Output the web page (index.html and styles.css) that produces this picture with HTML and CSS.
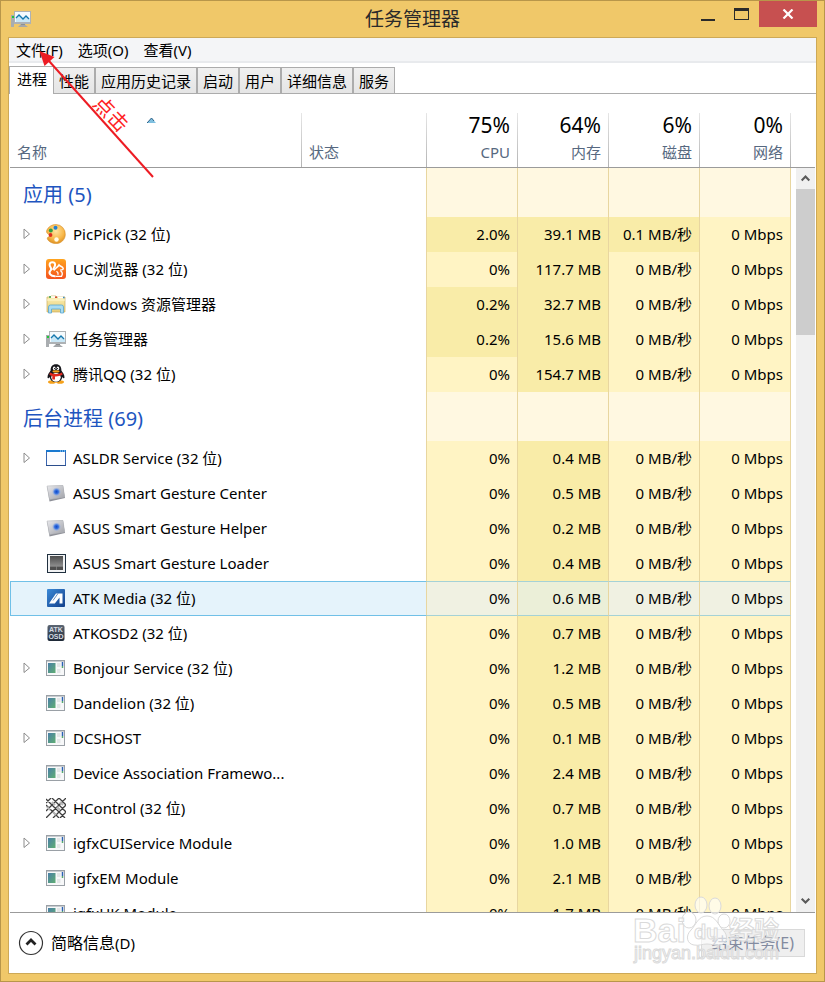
FILE: index.html
```html
<!DOCTYPE html>
<html lang="zh-CN">
<head>
<meta charset="utf-8">
<title>任务管理器</title>
<link rel="stylesheet" href="styles.css">
</head>
<body>
<svg class="defs" aria-hidden="true">
  <defs>
    <linearGradient id="gOrange" x1="0" y1="0" x2="0" y2="1"><stop offset="0" stop-color="#ffa51f"/><stop offset="1" stop-color="#f4511e"/></linearGradient>
    <radialGradient id="gPalette" cx=".5" cy=".35" r=".7"><stop offset="0" stop-color="#ffe3a0"/><stop offset=".6" stop-color="#f8b84a"/><stop offset="1" stop-color="#d98a1c"/></radialGradient>
    <linearGradient id="gBlue" x1="0" y1="0" x2="1" y2="1"><stop offset="0" stop-color="#3b8ad8"/><stop offset="1" stop-color="#123f8a"/></linearGradient>
    <linearGradient id="gPad" x1="0" y1="0" x2="1" y2="1"><stop offset="0" stop-color="#e9e9ec"/><stop offset="1" stop-color="#9fa1a8"/></linearGradient>
    <radialGradient id="gDot"><stop offset="0" stop-color="#0b45c8"/><stop offset=".45" stop-color="#3f78e0"/><stop offset="1" stop-color="#9db8ee" stop-opacity="0"/></radialGradient>
    <linearGradient id="gGreen" x1="0" y1="0" x2="1" y2="1"><stop offset="0" stop-color="#4a7fa8"/><stop offset="1" stop-color="#5fae72"/></linearGradient>
    <linearGradient id="gFolder" x1="0" y1="0" x2="0" y2="1"><stop offset="0" stop-color="#fbf0b4"/><stop offset="1" stop-color="#e9cd78"/></linearGradient>
    <linearGradient id="gNight" x1="0" y1="0" x2="0" y2="1"><stop offset="0" stop-color="#5c6673"/><stop offset="1" stop-color="#1d2836"/></linearGradient>
    <linearGradient id="gGrey" x1="0" y1="0" x2="0" y2="1"><stop offset="0" stop-color="#4c4c4c"/><stop offset="1" stop-color="#8c8c8c"/></linearGradient>
  </defs>
  <symbol id="i-monitor" viewBox="0 0 20 20">
    <rect x="0" y="6" width="3" height="12" fill="#a9adb0"/><rect x="1" y="7" width="2" height="2" fill="#1fc43a"/>
    <path d="M7 18l3-3h3l4 3z" fill="#a4a7aa"/><path d="M10 14h4v2h-4z" fill="#8d9093"/>
    <rect x="3" y="2" width="17" height="13" fill="#aeb2b5"/><rect x="4" y="3" width="15" height="10" fill="#f4fafd"/>
    <path d="M5 9l3-3 4 4 3-3 4 3v3H5z" fill="#c9e7f6"/><path d="M5 9l3-3 4 4 3-3 3 3" fill="none" stroke="#1478ae" stroke-width="1.300"/>
  </symbol>
  <symbol id="i-palette" viewBox="0 0 20 20">
    <path d="M10 .5a9.500 9.500 0 0 1 9.300 10c0 5-4.300 9.100-9.300 9.100-4 0-7.500-2-8.600-4.600-.6-1.500.9-2 1.900-2.400 1-.5.5-1.500-.6-2.100C.2 8.900.2 7.500 1 5.800 2.600 2.500 6 .5 10 .5z" fill="url(#gPalette)" stroke="#d7912c" stroke-width=".6"/>
    <circle cx="9.500" cy="3.700" r="2" fill="#1f7fd0"/><circle cx="4.800" cy="6.500" r="2" fill="#2ea045"/><circle cx="4.500" cy="11" r="1.900" fill="#dc3020"/><circle cx="10.500" cy="15.500" r="2.200" fill="#fffbe8"/>
  </symbol>
  <symbol id="i-uc" viewBox="0 0 20 20">
    <rect width="20" height="20" rx="3" fill="url(#gOrange)"/>
    <path d="M9.500 17.200C4.500 17.500 2 14 4.600 11.400 6.800 9.300 3.200 8 3.600 5.300c.4-2.800 5.200-3 5.500.2.200 2.300-1.600 3.300-1.900 5.300" fill="none" stroke="#fff" stroke-width="2"/>
    <path d="M8 11.500c.5-2.200 3.400-2.800 5-5.500.8 1.300 3.800 1.400 4.200 3.300.2 1.200-1.200 1.700-3 1.600" fill="none" stroke="#fff" stroke-width="1.500"/>
    <path d="M9.500 17.300h6c1.400-2.300.4-4.500-1-5.500M10.300 12.500q2.400.7 1.500 3.300" fill="none" stroke="#fff" stroke-width="1.300"/>
  </symbol>
  <symbol id="i-folder" viewBox="0 0 20 20">
    <path d="M1 3h3l1-1h5l1 1h8v15H1z" fill="url(#gFolder)" stroke="#cdb060" stroke-width=".7"/>
    <path d="M5 3h4M12 3.500h5" stroke="#fff" stroke-width="1.500"/><path d="M3 3h2" stroke="#3aa24b" stroke-width="1.500"/><path d="M9 3.200h2" stroke="#d04c3a" stroke-width="1.500"/><path d="M17 3.500h1.500" stroke="#3a8acb" stroke-width="1.500"/>
    <path d="M1 6h18" stroke="#fff8d0"/>
    <path d="M2.500 19v-6q0-2 2-2h11q2 0 2 2v6h-3v-4H5.500v4z" fill="#a9dcf2" stroke="#58a6cf" stroke-width=".8"/>
  </symbol>
  <symbol id="i-qq" viewBox="0 0 20 20">
    <ellipse cx="6" cy="18" rx="4" ry="1.800" fill="#f5a11b"/><ellipse cx="14" cy="18" rx="4" ry="1.800" fill="#f5a11b"/>
    <path d="M10 .3c3.700 0 5.400 2.500 5.400 6.200 1 1.700 3.300 4.300 3.100 7-.3 1.400-1.200.8-2.200-.6-.3 3-2.700 5.200-6.300 5.200S4 15.900 3.700 12.900c-1 1.400-1.900 2-2.200.6-.2-2.700 2.100-5.300 3.100-7C4.600 2.800 6.300.3 10 .3z" fill="#17171c"/>
    <ellipse cx="10" cy="13.300" rx="4.700" ry="4.400" fill="#fff"/>
    <ellipse cx="8.200" cy="4.300" rx="1.300" ry="1.900" fill="#fff"/><ellipse cx="11.900" cy="4.300" rx="1.300" ry="1.900" fill="#fff"/><circle cx="8.600" cy="4.600" r=".6"/><circle cx="11.500" cy="4.600" r=".6"/>
    <ellipse cx="10" cy="7.400" rx="3.500" ry="1.100" fill="#f5a11b"/>
    <path d="M4 8.500q6 3.200 12 0l.6 2.200q-4 2-7.600 1.700v3.200H6.300v-3.500q-1.600-.5-2.900-1.300z" fill="#e0281e"/>
  </symbol>
  <symbol id="i-window" viewBox="0 0 20 20">
    <rect x=".5" y="2.500" width="19" height="15" fill="#fbfcff" stroke="#3a66b0"/><path d="M0 2h20v2H0z" fill="#1878d0"/><path d="M14 3h1M16 3h1M18 3h1" stroke="#bfe0fb"/><path d="M0 17.500h20" stroke="#2a4d8c"/>
  </symbol>
  <symbol id="i-pad" viewBox="0 0 20 20">
    <path d="M1 3l16-.5 2 12.500L3.500 18.500z" fill="#8e9098"/><path d="M1 3l16-.5 1.500 11.500L3.500 16.500z" fill="url(#gPad)" stroke="#b4b6bb" stroke-width=".5"/><circle cx="10.500" cy="8.800" r="4.600" fill="url(#gDot)"/>
  </symbol>
  <symbol id="i-touch" viewBox="0 0 20 20">
    <rect x="1.500" y="1.500" width="18" height="18" fill="#f1f2f3" stroke="#20303f"/><rect x="4" y="3" width="13" height="10" fill="url(#gGrey)"/><path d="M4 13h13v4H4z" fill="#4f4f4f"/><path d="M4 13.500h13M10.500 13v4" stroke="#8a8a8a" stroke-width=".7"/>
  </symbol>
  <symbol id="i-atk" viewBox="0 0 20 20">
    <rect x="1" y="1" width="18" height="18" rx="1" fill="url(#gBlue)"/><path d="M3 15.500L10 5.500h6.500v10h-3V9.500L8.800 15.500z" fill="#fff"/><path d="M12 5.500L7 12.500" stroke="#2762ad" stroke-width=".7"/>
  </symbol>
  <symbol id="i-osd" viewBox="0 0 20 20">
    <rect x="1.500" y="2" width="17" height="16" rx="2" fill="url(#gNight)"/>
    <text x="10" y="9" class="osd-text">ATK</text><text x="10" y="16" class="osd-text">OSD</text>
  </symbol>
  <symbol id="i-app" viewBox="0 0 20 20">
    <rect x=".5" y="2.500" width="18" height="15" fill="#f7f8f9" stroke="#9aa0a6"/><path d="M1 3.500h17" stroke="#c8ccd0"/><rect x="2" y="5" width="7.500" height="10" fill="url(#gGreen)"/><path d="M11 6h3.500M11 8h3.500M11 12h3.500M11 14h3.500" stroke="#d0d3d6" stroke-width="1.200"/><path d="M16.500 4v4" stroke="#2c62b4" stroke-width="1.500"/><path d="M16.500 8v2" stroke="#56a871" stroke-width="1.500"/>
  </symbol>
  <symbol id="i-grid" viewBox="0 0 20 20">
    <g fill="none" stroke="#3e3e3e" stroke-width="1.300"><path d="M0 5l5-5M0 13L13 0M0 20L20 0M7 20L20 7M14 20l6-6M0 7l13 13M0 1l19 19M6 0l14 14M13 0l7 7"/></g>
    <path d="M1 9l3 3M6 4l3 3M11 9l3 3M7 14l3 3M14 4l3 3" stroke="#b5b5b5" stroke-width="2"/>
  </symbol>
  <symbol id="i-tri" viewBox="0 0 8 12"><path d="M1 1v9.500L6.500 6z" fill="#fff" stroke="#8c8c8c"/></symbol>
</svg>

<div class="window">
  <header class="titlebar">
    <svg class="icon"><use href="#i-monitor"/></svg>
    <h1>任务管理器</h1>
    <div class="controls">
      <button class="min" aria-label="最小化"><svg width="14" height="13"><path d="M0 11h14v2H0z" fill="#2a2a2a"/></svg></button>
      <button class="max" aria-label="最大化"><svg width="16" height="13"><path d="M0 0h15v12H0zM1 3v8h13V3z" fill="#2a2a2a" fill-rule="evenodd"/></svg></button>
      <button class="close" aria-label="关闭"><svg width="12" height="10"><path d="M1.500.5l9 9M10.500.5l-9 9" stroke="#fff" stroke-width="2.200"/></svg></button>
    </div>
  </header>

  <main class="client">
    <nav class="menu"><button>文件(F)</button><button>选项(O)</button><button>查看(V)</button></nav>
    <div class="tabs" role="tablist">
      <button role="tab" class="active" aria-selected="true">进程</button><button role="tab">性能</button><button role="tab">应用历史记录</button><button role="tab">启动</button><button role="tab">用户</button><button role="tab">详细信息</button><button role="tab">服务</button>
    </div>

    <div class="list">
      <table>
        <colgroup><col><col class="c-status"><col class="c-num"><col class="c-num"><col class="c-num"><col class="c-num"></colgroup>
        <thead><tr>
          <th class="left sorted"><svg class="sort" viewBox="0 0 9 5"><path d="M0 5l4.500-5L9 5z" fill="#7fc0e0"/><path d="M0 5l4.500-5L7 3" fill="none" stroke="#2b5f86"/></svg>名称</th>
          <th class="left">状态</th>
          <th><b>75%</b>CPU</th><th><b>64%</b>内存</th><th><b>6%</b>磁盘</th><th><b>0%</b>网络</th>
        </tr></thead>
        <tbody>
          <tr class="group"><td>应用 (5)</td><td></td><td></td><td></td><td></td><td></td></tr>
          <tr><td><div class="name"><button class="exp" aria-label="展开"><svg><use href="#i-tri"/></svg></button><svg class="icon"><use href="#i-palette"/></svg>PicPick (32 位)</div></td><td></td><td class="hot">2.0%</td><td class="hot">39.1 MB</td><td class="hot">0.1 MB/秒</td><td>0 Mbps</td></tr>
          <tr><td><div class="name"><button class="exp" aria-label="展开"><svg><use href="#i-tri"/></svg></button><svg class="icon"><use href="#i-uc"/></svg>UC浏览器 (32 位)</div></td><td></td><td>0%</td><td class="hot">117.7 MB</td><td>0 MB/秒</td><td>0 Mbps</td></tr>
          <tr><td><div class="name"><button class="exp" aria-label="展开"><svg><use href="#i-tri"/></svg></button><svg class="icon"><use href="#i-folder"/></svg>Windows 资源管理器</div></td><td></td><td class="hot">0.2%</td><td class="hot">32.7 MB</td><td>0 MB/秒</td><td>0 Mbps</td></tr>
          <tr><td><div class="name"><button class="exp" aria-label="展开"><svg><use href="#i-tri"/></svg></button><svg class="icon"><use href="#i-monitor"/></svg>任务管理器</div></td><td></td><td class="hot">0.2%</td><td class="hot">15.6 MB</td><td>0 MB/秒</td><td>0 Mbps</td></tr>
          <tr><td><div class="name"><button class="exp" aria-label="展开"><svg><use href="#i-tri"/></svg></button><svg class="icon"><use href="#i-qq"/></svg>腾讯QQ (32 位)</div></td><td></td><td>0%</td><td class="hot">154.7 MB</td><td>0 MB/秒</td><td>0 Mbps</td></tr>
          <tr class="group"><td>后台进程 (69)</td><td></td><td></td><td></td><td></td><td></td></tr>
          <tr><td><div class="name"><button class="exp" aria-label="展开"><svg><use href="#i-tri"/></svg></button><svg class="icon"><use href="#i-window"/></svg>ASLDR Service (32 位)</div></td><td></td><td>0%</td><td class="hot">0.4 MB</td><td>0 MB/秒</td><td>0 Mbps</td></tr>
          <tr><td><div class="name"><span class="exp"></span><svg class="icon"><use href="#i-pad"/></svg>ASUS Smart Gesture Center</div></td><td></td><td>0%</td><td class="hot">0.5 MB</td><td>0 MB/秒</td><td>0 Mbps</td></tr>
          <tr><td><div class="name"><span class="exp"></span><svg class="icon"><use href="#i-pad"/></svg>ASUS Smart Gesture Helper</div></td><td></td><td>0%</td><td class="hot">0.2 MB</td><td>0 MB/秒</td><td>0 Mbps</td></tr>
          <tr><td><div class="name"><span class="exp"></span><svg class="icon"><use href="#i-touch"/></svg>ASUS Smart Gesture Loader</div></td><td></td><td>0%</td><td class="hot">0.4 MB</td><td>0 MB/秒</td><td>0 Mbps</td></tr>
          <tr class="selected"><td><div class="name"><span class="exp"></span><svg class="icon"><use href="#i-atk"/></svg>ATK Media (32 位)</div></td><td></td><td>0%</td><td class="hot">0.6 MB</td><td>0 MB/秒</td><td>0 Mbps</td></tr>
          <tr><td><div class="name"><span class="exp"></span><svg class="icon"><use href="#i-osd"/></svg>ATKOSD2 (32 位)</div></td><td></td><td>0%</td><td class="hot">0.7 MB</td><td>0 MB/秒</td><td>0 Mbps</td></tr>
          <tr><td><div class="name"><button class="exp" aria-label="展开"><svg><use href="#i-tri"/></svg></button><svg class="icon"><use href="#i-app"/></svg>Bonjour Service (32 位)</div></td><td></td><td>0%</td><td class="hot">1.2 MB</td><td>0 MB/秒</td><td>0 Mbps</td></tr>
          <tr><td><div class="name"><span class="exp"></span><svg class="icon"><use href="#i-app"/></svg>Dandelion (32 位)</div></td><td></td><td>0%</td><td class="hot">0.5 MB</td><td>0 MB/秒</td><td>0 Mbps</td></tr>
          <tr><td><div class="name"><button class="exp" aria-label="展开"><svg><use href="#i-tri"/></svg></button><svg class="icon"><use href="#i-app"/></svg>DCSHOST</div></td><td></td><td>0%</td><td class="hot">0.1 MB</td><td>0 MB/秒</td><td>0 Mbps</td></tr>
          <tr><td><div class="name"><span class="exp"></span><svg class="icon"><use href="#i-app"/></svg>Device Association Framewo...</div></td><td></td><td>0%</td><td class="hot">2.4 MB</td><td>0 MB/秒</td><td>0 Mbps</td></tr>
          <tr><td><div class="name"><span class="exp"></span><svg class="icon"><use href="#i-grid"/></svg>HControl (32 位)</div></td><td></td><td>0%</td><td class="hot">0.7 MB</td><td>0 MB/秒</td><td>0 Mbps</td></tr>
          <tr><td><div class="name"><button class="exp" aria-label="展开"><svg><use href="#i-tri"/></svg></button><svg class="icon"><use href="#i-app"/></svg>igfxCUIService Module</div></td><td></td><td>0%</td><td class="hot">1.0 MB</td><td>0 MB/秒</td><td>0 Mbps</td></tr>
          <tr><td><div class="name"><span class="exp"></span><svg class="icon"><use href="#i-app"/></svg>igfxEM Module</div></td><td></td><td>0%</td><td class="hot">2.1 MB</td><td>0 MB/秒</td><td>0 Mbps</td></tr>
          <tr><td><div class="name"><span class="exp"></span><svg class="icon"><use href="#i-app"/></svg>igfxHK Module</div></td><td></td><td>0%</td><td class="hot">1.7 MB</td><td>0 MB/秒</td><td>0 Mbps</td></tr>
        </tbody>
      </table>
      <div class="side">
        <div class="side-head"></div>
        <div class="scrollbar">
          <svg viewBox="0 0 20 20"><path d="M6 12l4-4 4 4" fill="none" stroke="#5a5a5a" stroke-width="2.200"/></svg>
          <div class="thumb"></div>
          <svg viewBox="0 0 20 20"><path d="M6 7l4 4 4-4" fill="none" stroke="#5a5a5a" stroke-width="2.200"/></svg>
        </div>
      </div>
    </div>

    <footer class="footer">
      <button class="fewer"><svg width="26" height="26"><circle cx="13" cy="13" r="11.500" fill="#fff" stroke="#333" stroke-width="1.200"/><path d="M8.500 14.500l4.500-4.500 4.500 4.500" fill="none" stroke="#222" stroke-width="2.800"/></svg><span>简略信息<small>(D)</small></span></button>
      <button class="end" disabled>结束任务(E)</button>
    </footer>
  </main>

  <svg class="arrow" viewBox="0 0 130 140" aria-hidden="true">
    <path d="M114 138L10 22" stroke="#ed1c24" stroke-width="2"/><path d="M.5 12l15 6-10 9z" fill="#ed1c24"/>
    <text class="note" transform="translate(67 80) rotate(46)">点击</text>
  </svg>

  <svg class="watermark" viewBox="0 0 160 75" aria-hidden="true">
    <g class="paw"><ellipse cx="57" cy="27" rx="7" ry="8"/><ellipse cx="69" cy="12" rx="6" ry="8"/><ellipse cx="83" cy="13" rx="6" ry="8"/><ellipse cx="92" cy="28" rx="6" ry="7"/>
    <path d="M75 23c9 0 11 9 16 14 6 6 4 14-3 15-5 1-8-1-13-1s-8 2-13 1c-7-1-9-9-3-15 5-5 7-14 16-14z"/></g>
    <text class="brand" x="1" y="49">Bai</text><text class="du" x="62" y="46">du</text><text class="cn" x="97" y="46">经验</text>
    <text class="url" x="2" y="66">jingyan.baidu.com</text>
  </svg>
</div>
</body>
</html>
```

FILE: styles.css
```css
* { box-sizing: border-box; }

body {
  margin: 0;
  font: 15px/20px "Noto Sans", "Noto Sans CJK SC", sans-serif;
  color: #000;
}

button {
  margin: 0;
  padding: 0;
  border: 0;
  background: none;
  font: inherit;
  color: inherit;
}

.defs { position: absolute; width: 0; height: 0; }
.icon { flex: none; width: 20px; height: 20px; }
.osd-text { font: bold 7px "Liberation Sans", sans-serif; fill: #d5dbe2; text-anchor: middle; }

.window {
  position: relative;
  display: flex;
  flex-direction: column;
  height: 100vh;
  padding: 0 7px 7px;
  border: 1px solid #b8964a;
  background: #f0c869;
}

.titlebar {
  display: grid;
  grid-template-columns: 1fr auto 1fr;
  align-items: center;
  height: 36px;
}
.titlebar .icon { margin-left: 3px; }
.titlebar h1 {
  margin: 0;
  font-size: 19px;
  line-height: 36px;
  font-weight: 400;
  color: #2a2a2a;
}
.controls {
  display: flex;
  align-self: start;
  justify-content: flex-end;
  height: 26px;
}
.controls svg { display: block; margin: auto; }
.min, .max { width: 34px; }
.close { width: 58px; background: #c75050; }

.client {
  flex: 1;
  min-height: 0;
  display: flex;
  flex-direction: column;
  border: 1px solid #cda957;
  background: #fff;
}

.menu {
  display: flex;
  gap: 15px;
  height: 25px;
  padding: 0 7px;
  border-bottom: 2px solid #e8eaed;
  background: #f4f5f7;
}

.tabs {
  display: flex;
  align-items: flex-end;
  height: 31px;
  border-bottom: 1px solid #acacac;
}
.tabs button {
  height: 26px;
  padding: 0 5px;
  border: 1px solid #acacac;
  border-bottom: 0;
  background: linear-gradient(#f0f0f0, #e5e5e5);
}
.tabs .active {
  height: 28px;
  margin-bottom: -1px;
  padding: 0 6px 3px 7px;
  border-right: 0;
  background: #fff;
}

.list {
  flex: 1;
  min-height: 0;
  display: flex;
  overflow: hidden;
  padding: 0 1px;
}
table {
  flex: 1;
  align-self: flex-start;
  width: 0;
  table-layout: fixed;
  border-spacing: 0;
}
.c-status { width: 125px; }
.c-num { width: 91px; }

th {
  height: 74px;
  padding: 0 8px 5px;
  border-bottom: 1px solid #9b9b9b;
  background: linear-gradient(#e6e6e6, #b4b4b4) right bottom / 1px 54px no-repeat;
  vertical-align: bottom;
  text-align: right;
  font-weight: 400;
  color: #566880;
}
th.left { padding-left: 7px; text-align: left; }
th b {
  display: block;
  margin-bottom: 5px;
  font-size: 21px;
  line-height: 24px;
  font-weight: 400;
  color: #000;
}
.sorted { position: relative; }
.sort { position: absolute; left: 137px; top: 24px; width: 9px; height: 5px; }

td {
  height: 35px;
  padding: 0 7px 2px;
  border-right: 1px solid #e8d6a0;
  background: #fff4c4;
  text-align: right;
  white-space: nowrap;
}
td:first-child { padding: 0 0 2px; border-right: 0; text-align: left; }
td:nth-child(-n+2) { background: #fff; }
.hot { background: #f9eca8; }
.group td { height: 49px; background: #fff8e1; }
.group td:nth-child(-n+2) { background: #fff; }
.group td:first-child {
  padding: 4px 13px 0;
  font-size: 20px;
  color: #1e55c0;
}
.selected td {
  border-top: 1px solid #a5d2d6;
  border-bottom: 1px solid #a5d2d6;
  background: #f0f1e2;
}
.selected .hot { background: #ebefd8; }
.selected td:nth-child(-n+2) {
  border-color: #70c0e7;
  border-right-color: #e8d6a0;
  background: #e5f3fb;
}
.selected td:first-child { border-left: 1px solid #70c0e7; }
.selected .name { padding-left: 12px; }

.name { display: flex; align-items: center; padding-left: 13px; }
.name .icon { margin: 0 7px 0 15px; }
.exp { flex: none; width: 8px; height: 12px; }
.exp svg { display: block; width: 8px; height: 12px; }

.side { display: flex; flex-direction: column; width: 24px; }
.side-head { flex: none; height: 74px; border-bottom: 1px solid #9b9b9b; }
.scrollbar {
  flex: 1;
  display: flex;
  flex-direction: column;
  margin-left: 5px;
  background: #f0f0f0;
}
.scrollbar svg { width: 19px; height: 21px; }
.scrollbar svg:last-child { margin-top: auto; }
.thumb { height: 146px; background: #cdcdcd; }

.footer {
  display: flex;
  align-items: center;
  justify-content: space-between;
  height: 61px;
  margin: 0 1px;
  padding: 0 10px 0 8px;
  border-top: 1px solid #9b9b9b;
}
.fewer { display: flex; align-items: center; gap: 7px; font-size: 16px; }
.fewer small { font-size: 15px; }
.end {
  height: 28px;
  padding: 0 10px;
  border: 1px solid #d9d9d9;
  background: #efefef;
  font-size: 16px;
  color: #838ba0;
}

.arrow { position: absolute; left: 38px; top: 38px; width: 130px; height: 140px; pointer-events: none; }
.note { font: 20px "Noto Sans CJK SC", sans-serif; fill: #f22; text-anchor: middle; }

.watermark { position: absolute; right: 32px; bottom: 13px; width: 160px; height: 75px; pointer-events: none; }
.watermark text, .paw { fill: #fff; fill-opacity: .6; stroke: #dadada; stroke-width: 1px; }
.brand { font: bold 34px "Liberation Sans", sans-serif; }
.cn { font: bold 25px "Noto Sans CJK SC", sans-serif; }
.du { font: bold 20px "Liberation Sans", sans-serif; }
.url { font: 18px "Liberation Sans", sans-serif; }
```
